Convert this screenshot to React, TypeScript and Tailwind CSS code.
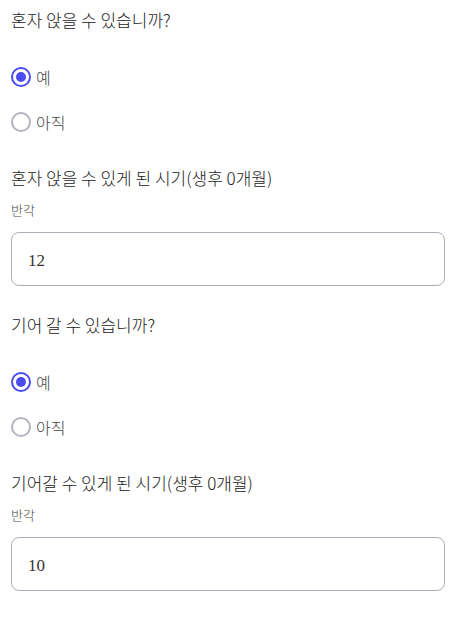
import { useState } from 'react';

type Question = {
  id: string;
  title: string;
  label: string;
  value: string;
};

const questions: Question[] = [
  { id: 'sit', title: '혼자 앉을 수 있습니까?', label: '혼자 앉을 수 있게 된 시기(생후 0개월)', value: '12' },
  { id: 'crawl', title: '기어 갈 수 있습니까?', label: '기어갈 수 있게 된 시기(생후 0개월)', value: '10' },
];

const font = { fontFamily: '"Noto Sans CJK KR", "Noto Sans", sans-serif' };

const Radio: React.FC<{ checked: boolean; label: string; onClick: () => void }> = ({ checked, label, onClick }) => (
  <button type="button" onClick={onClick} className="flex items-center gap-[5px] h-5 text-left">
    <span
      className={`w-5 h-5 rounded-full border-2 flex items-center justify-center ${
        checked ? 'border-[#4b4bf2]' : 'border-[#b3b3c2]'
      }`}
    >
      {checked && <span className="w-[10px] h-[10px] rounded-full bg-[#4b4bf2]" />}
    </span>
    <span className="text-[16px] leading-5 font-light text-[#444]">{label}</span>
  </button>
);

const QuestionBlock: React.FC<{ q: Question }> = ({ q }) => {
  const [answer, setAnswer] = useState<'yes' | 'no'>('yes');
  const [value, setValue] = useState(q.value);

  return (
    <div>
      <p className="text-[17px] leading-6 font-light text-[#222]">{q.title}</p>
      <div className="mt-[35px] flex flex-col gap-[25px]">
        <Radio checked={answer === 'yes'} label="예" onClick={() => setAnswer('yes')} />
        <Radio checked={answer === 'no'} label="아직" onClick={() => setAnswer('no')} />
      </div>
      <p className="mt-[34px] text-[17px] leading-6 font-light text-[#222]">{q.label}</p>
      <p className="mt-[10px] text-[13px] leading-5 font-light text-[#444]">반각</p>
      <input
        value={value}
        onChange={(e) => setValue(e.target.value)}
        className="mt-3 w-full h-[54px] rounded-lg border border-[#aeaebb] px-4 pt-[3px] text-[17px] text-[#3a3232] outline-none"
        style={{ fontFamily: '"Liberation Serif", serif' }}
      />
    </div>
  );
};

export default function App() {
  return (
    <div className="bg-white min-h-screen px-[11px] pt-2" style={font}>
      <div className="flex flex-col gap-[27px]">
        {questions.map((q) => (
          <QuestionBlock key={q.id} q={q} />
        ))}
      </div>
    </div>
  );
}
